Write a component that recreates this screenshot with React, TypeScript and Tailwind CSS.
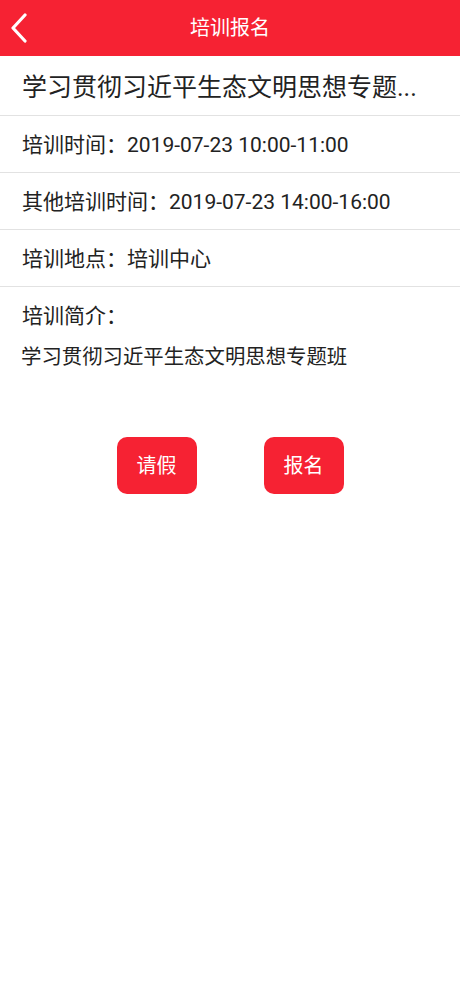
import { useState } from "react"

const rows = [
  { label: "培训时间", value: "2019-07-23 10:00-11:00" },
  { label: "其他培训时间", value: "2019-07-23 14:00-16:00" },
  { label: "培训地点", value: "培训中心" },
]

export default function App() {
  const [applied, setApplied] = useState(false)

  return (
    <div className="min-h-[996px] bg-white text-[#222] font-['Roboto','Noto_Sans_CJK_SC',sans-serif]">
      {/* Header */}
      <header className="relative h-14 bg-[#f62233] flex items-center justify-center">
        <button className="absolute left-0 top-0 h-14 w-12 flex items-center justify-center" aria-label="返回">
          <svg width="20" height="30" viewBox="0 0 20 30" fill="none" className="-ml-2">
            <path d="M15 2 L3 15 L15 28" stroke="white" strokeWidth="3.2" strokeLinecap="round" strokeLinejoin="round" />
          </svg>
        </button>
        <h1 className="text-white text-[20px] leading-none">培训报名</h1>
      </header>

      {/* Title */}
      <div className="h-[60px] border-b border-[#e2e2e2] px-[22px] flex items-center pt-1">
        <p className="text-[25px] whitespace-nowrap">学习贯彻习近平生态文明思想专题...</p>
      </div>

      {rows.map((row) => (
        <div key={row.label} className="h-[57px] border-b border-[#e2e2e2] px-[22px] flex items-center pt-1">
          <p className="text-[21px] whitespace-nowrap">
            {row.label}：{row.value}
          </p>
        </div>
      ))}

      {/* Intro */}
      <div className="px-[22px] pt-[15px]">
        <p className="text-[21px] leading-7">培训简介：</p>
        <p className="text-[20.4px] leading-7 mt-[13px] -ml-px">学习贯彻习近平生态文明思想专题班</p>
      </div>

      {/* Actions */}
      <div className="flex justify-center gap-[67px] mt-[66px]">
        <button className="w-20 h-[57px] rounded-[10px] bg-[#f62233] text-white text-[20px]">请假</button>
        <button
          onClick={() => setApplied(!applied)}
          className="w-20 h-[57px] rounded-[10px] bg-[#f62233] text-white text-[20px]"
        >
          报名
        </button>
      </div>
    </div>
  )
}
